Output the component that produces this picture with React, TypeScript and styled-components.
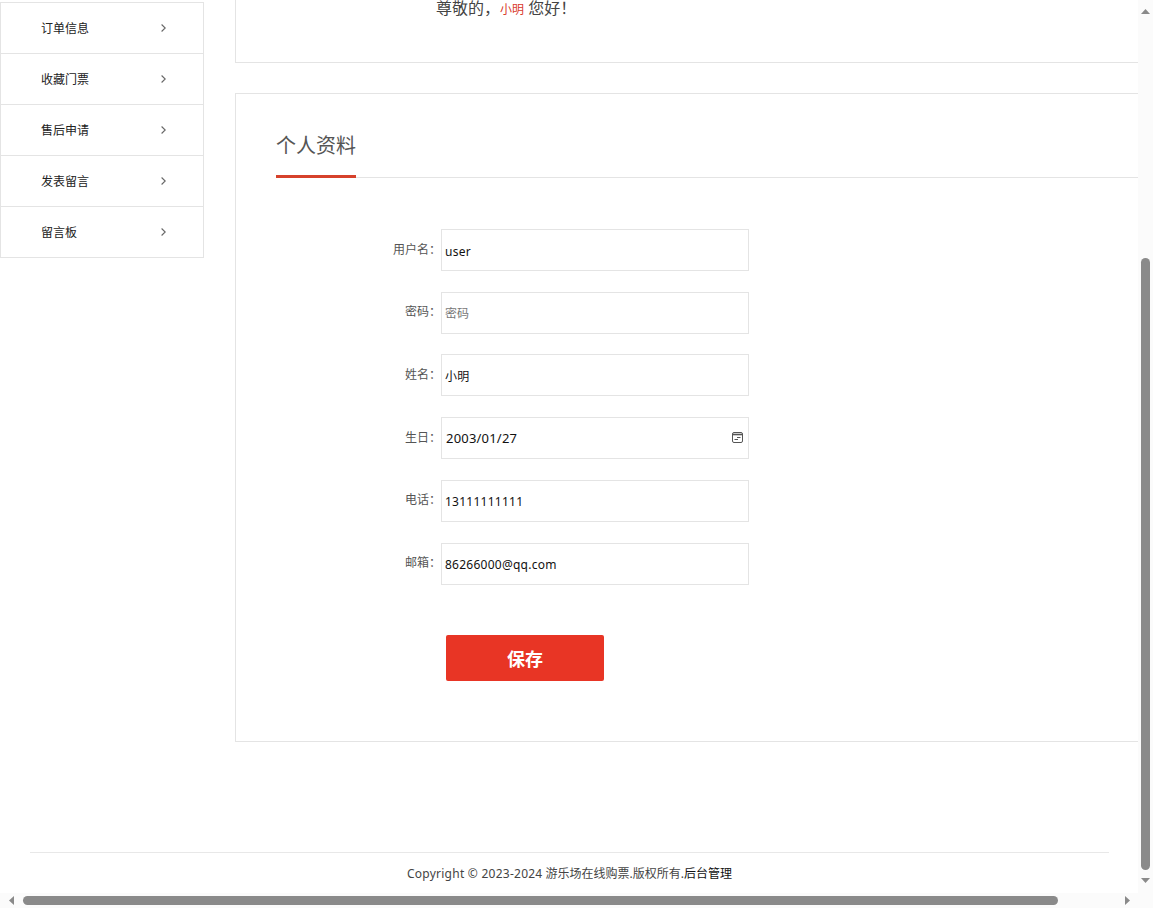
import React from 'react';
import styled, { createGlobalStyle } from 'styled-components';

const GlobalStyle = createGlobalStyle`
  html, body {
    margin: 0;
    padding: 0;
    background: #fff;
    overflow: hidden;
  }
  * {
    box-sizing: border-box;
  }
  body {
    font-family: "Noto Sans", "Noto Sans CJK SC", sans-serif;
    color: #333;
  }
`;

const Viewport = styled.div`
  display: grid;
  grid-template-columns: 1138px 15px;
  grid-template-rows: 893px 15px;
  width: 1153px;
  height: 908px;
  overflow: hidden;
  background: #fff;
`;

const Page = styled.div`
  overflow: hidden;
`;

const Columns = styled.div`
  display: flex;
  align-items: flex-start;
  width: 1300px;
`;

const SideMenu = styled.ul`
  flex: 0 0 204px;
  margin: 2px 31px 0 0;
  padding: 0;
  list-style: none;
  border: 1px solid #e4e4e4;
`;

const SideItem = styled.li`
  display: flex;
  align-items: center;
  justify-content: space-between;
  height: 51px;
  padding: 0 37px 0 40px;
  font-size: 12px;
  color: #222;
  border-bottom: 1px solid #e4e4e4;

  &:last-child {
    height: 50px;
    border-bottom: 0;
  }
`;

const Main = styled.div`
  flex: 0 0 1000px;
`;

const GreetingCard = styled.div`
  height: 63px;
  padding-left: 200px;
  border-left: 1px solid #e4e4e4;
  border-bottom: 1px solid #e4e4e4;
  font-size: 16px;
  line-height: 16px;
  color: #444;
`;

const UserName = styled.span`
  font-size: 12px;
  color: #d9392b;
`;

const ProfileCard = styled.section`
  height: 649px;
  margin-top: 30px;
  padding: 0 40px;
  border: 1px solid #e4e4e4;
`;

const TitleBar = styled.div`
  height: 84px;
  border-bottom: 1px solid #e4e4e4;
`;

const Title = styled.h2`
  display: inline-block;
  width: 80px;
  height: 84px;
  margin: 0;
  padding-top: 38px;
  font-size: 20px;
  font-weight: 400;
  line-height: 28px;
  color: #555;
  white-space: nowrap;
  border-bottom: 3px solid #d6412b;
`;

const Form = styled.form`
  display: flex;
  flex-direction: column;
  gap: 20.72px;
  margin-top: 51px;
`;

const Field = styled.div`
  display: flex;
  align-items: center;
  height: 42px;
`;

const Label = styled.label`
  flex: 0 0 165px;
  margin-top: -3px;
  font-size: 12px;
  text-align: right;
  color: #555;
`;

const InputBox = styled.div`
  position: relative;
  width: 308px;
  height: 42px;
`;

const Input = styled.input<{ $date?: boolean }>`
  width: 100%;
  height: 100%;
  padding: ${(p) => (p.$date ? '0 3px 0 4px' : '2px 3px 0')};
  font-family: inherit;
  font-size: ${(p) => (p.$date ? '13px' : '12px')};
  letter-spacing: ${(p) => (p.$date ? '0.2px' : '0.25px')};
  color: #111;
  background: #fff;
  border: 1px solid #e4e4e4;
  outline: none;

  &::placeholder {
    font-size: 12px;
    letter-spacing: 0;
    color: #777;
  }
`;

const CalendarIcon = styled.svg`
  position: absolute;
  top: 15px;
  right: 6px;
  width: 11px;
  height: 11px;
`;

const SaveButton = styled.button`
  display: block;
  width: 158px;
  height: 46px;
  margin: 29.68px 0 0 170px;
  padding: 0;
  font-family: inherit;
  font-size: 18px;
  font-weight: 700;
  color: #fff;
  background: #e83525;
  border: 0;
  border-radius: 2px;
`;

const Footer = styled.footer`
  width: 1079px;
  height: 40px;
  margin: 110px 0 0 30px;
  padding-top: 12px;
  font-size: 12px;
  line-height: 18px;
  text-align: center;
  color: #444;
  border-top: 1px solid #e8e8e8;
`;

const Copyright = styled.span`
  letter-spacing: 0.25px;
`;

const AdminLink = styled.a`
  color: #111;
`;

const VerticalTrack = styled.div`
  display: flex;
  flex-direction: column;
  align-items: center;
  padding-top: 8px;
  background: #fbfbfb;
`;

const HorizontalTrack = styled.div`
  grid-column: 1 / 3;
  display: flex;
  align-items: center;
  padding: 0 21px 0 7px;
  background: #fbfbfb;
`;

const VerticalThumb = styled.div`
  flex: none;
  width: 9px;
  height: 612px;
  margin: 241px 0 6px;
  border-radius: 5px;
  background: #8a8a8a;
`;

const HorizontalThumb = styled.div`
  flex: none;
  width: 1035px;
  height: 9px;
  margin: 0 auto 0 7px;
  border-radius: 5px;
  background: #8a8a8a;
`;

const Arrow = styled.svg`
  flex: none;
  width: 9px;
  height: 9px;
  fill: #8a8a8a;
`;

const Chevron = () => (
  <svg width="5" height="8" viewBox="0 0 5 8" fill="none" stroke="#666" strokeWidth="1.1">
    <path d="M0.6 0.5 L4.2 4 L0.6 7.5" />
  </svg>
);

const menu = ['订单信息', '收藏门票', '售后申请', '发表留言', '留言板'];

const fields = [
  { label: '用户名', value: 'user' },
  { label: '密码', placeholder: '密码' },
  { label: '姓名', value: '小明' },
  { label: '生日', value: '2003/01/27', date: true },
  { label: '电话', value: '13111111111' },
  { label: '邮箱', value: '86266000@qq.com' },
];

const App = () => {
  return (
    <Viewport>
      <GlobalStyle />
      <Page>
        <Columns>
          <SideMenu>
            {menu.map((item) => (
              <SideItem key={item}>
                {item}
                <Chevron />
              </SideItem>
            ))}
          </SideMenu>
          <Main>
            <GreetingCard>
              尊敬的，<UserName>小明</UserName> 您好！
            </GreetingCard>
            <ProfileCard>
              <TitleBar>
                <Title>个人资料</Title>
              </TitleBar>
              <Form>
                {fields.map((f) => (
                  <Field key={f.label}>
                    <Label>{f.label}：</Label>
                    <InputBox>
                      <Input readOnly $date={f.date} value={f.value} placeholder={f.placeholder} />
                      {f.date && (
                        <CalendarIcon viewBox="0 0 11 11" fill="none" stroke="#555" strokeWidth="1">
                          <rect x="0.5" y="0.5" width="10" height="10" rx="1.5" />
                          <path d="M0.5 2.5 H10.5" strokeWidth="1.6" />
                          <path d="M5 5.5 H8.5 M2.5 7.5 H6" />
                        </CalendarIcon>
                      )}
                    </InputBox>
                  </Field>
                ))}
                <SaveButton type="button">保存</SaveButton>
              </Form>
            </ProfileCard>
          </Main>
        </Columns>
        <Footer>
          <Copyright>Copyright © 2023-2024</Copyright> 游乐场在线购票.版权所有.
          <AdminLink>后台管理</AdminLink>
        </Footer>
      </Page>
      <VerticalTrack>
        <Arrow viewBox="0 0 9 9">
          <path d="M4.5 1 L9 6 H0 Z" />
        </Arrow>
        <VerticalThumb />
        <Arrow viewBox="0 0 9 9">
          <path d="M0 2 H9 L4.5 7 Z" />
        </Arrow>
      </VerticalTrack>
      <HorizontalTrack>
        <Arrow viewBox="0 0 9 9">
          <path d="M7 0 V9 L2 4.5 Z" />
        </Arrow>
        <HorizontalThumb />
        <Arrow viewBox="0 0 9 9">
          <path d="M2 0 V9 L7 4.5 Z" />
        </Arrow>
      </HorizontalTrack>
    </Viewport>
  );
};

export default App;
